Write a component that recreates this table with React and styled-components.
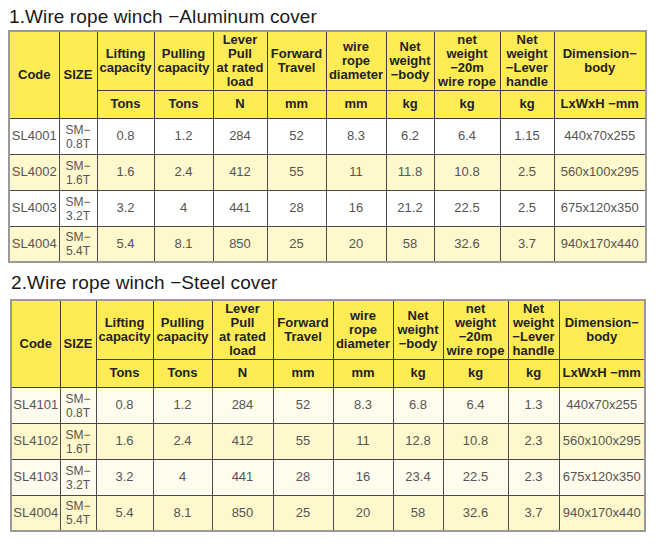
import React from "react";
import styled, { createGlobalStyle } from "styled-components";

const Global = createGlobalStyle`
  html, body { margin: 0; padding: 0; background: #ffffff; }
  body { font-family: "Liberation Sans", Arial, sans-serif; }
`;

const Page = styled.div`
  width: 662px;
  display: flex;
  flex-direction: column;
`;

const Section = styled.section`
  display: flex;
  flex-direction: column;
  padding-left: ${(p) => p.$left}px;
`;

const Title = styled.h2`
  margin: 0;
  padding: ${(p) => p.$top}px 0 ${(p) => p.$bottom}px 1px;
  font-size: 19px;
  line-height: 22px;
  font-weight: normal;
  color: #1a1a1a;
  letter-spacing: 0.1px;
`;

const Table = styled.table`
  border-collapse: collapse;
  table-layout: fixed;
  width: ${(p) => p.$width}px;
  border: 2px solid #9a9a9a;
`;

const HeadRow = styled.tr`
  height: ${(p) => p.$h}px;
  background: #ffec55;
`;

const Th = styled.th`
  border: 1px solid #3c3c3c;
  padding: 0;
  font-size: 13px;
  line-height: 14px;
  font-weight: bold;
  color: #222;
  text-align: center;
  vertical-align: middle;
  white-space: nowrap;
  overflow: hidden;
`;

const Row = styled.tr`
  height: 36px;
  background: ${(p) => p.$bg};
`;

const Td = styled.td`
  border: 1px solid #4a4a4a;
  padding: 0;
  font-size: 13px;
  line-height: 14px;
  color: #555;
  text-align: center;
  vertical-align: middle;
  white-space: nowrap;
  overflow: hidden;
`;

const SizeCell = styled(Td)`
  font-size: 12px;
  line-height: 14px;
  padding-top: 1px;
`;

const headers = [
  ["Lifting", "capacity"],
  ["Pulling", "capacity"],
  ["Lever", "Pull", "at rated", "load"],
  ["Forward", "Travel"],
  ["wire", "rope", "diameter"],
  ["Net", "weight", "\u2212body"],
  ["net", "weight", "\u221220m", "wire rope"],
  ["Net", "weight", "\u2212Lever", "handle"],
  ["Dimension\u2212", "body"],
];

const units = ["Tons", "Tons", "N", "mm", "mm", "kg", "kg", "kg", "LxWxH \u2212mm"];

const Lines = ({ lines }) =>
  lines.map((l, i) => (
    <React.Fragment key={i}>
      {i > 0 && <br />}
      {l}
    </React.Fragment>
  ));

const SpecTable = ({ cols, rows, bgs }) => (
  <Table $width={cols.reduce((a, b) => a + b, 0)}>
    <colgroup>
      {cols.map((w, i) => (
        <col key={i} style={{ width: w }} />
      ))}
    </colgroup>
    <thead>
      <HeadRow $h={59}>
        <Th rowSpan={2}>Code</Th>
        <Th rowSpan={2}>SIZE</Th>
        {headers.map((h, i) => (
          <Th key={i}>
            <Lines lines={h} />
          </Th>
        ))}
      </HeadRow>
      <HeadRow $h={28}>
        {units.map((u, i) => (
          <Th key={i}>{u}</Th>
        ))}
      </HeadRow>
    </thead>
    <tbody>
      {rows.map((r, ri) => (
        <Row key={ri} $bg={bgs[ri % 2]}>
          <Td>{r[0]}</Td>
          <SizeCell>
            SM{"\u2212"}
            <br />
            {r[1]}
          </SizeCell>
          {r.slice(2).map((v, i) => (
            <Td key={i}>{v}</Td>
          ))}
        </Row>
      ))}
    </tbody>
  </Table>
);

const rows1 = [
  ["SL4001", "0.8T", "0.8", "1.2", "284", "52", "8.3", "6.2", "6.4", "1.15", "440x70x255"],
  ["SL4002", "1.6T", "1.6", "2.4", "412", "55", "11", "11.8", "10.8", "2.5", "560x100x295"],
  ["SL4003", "3.2T", "3.2", "4", "441", "28", "16", "21.2", "22.5", "2.5", "675x120x350"],
  ["SL4004", "5.4T", "5.4", "8.1", "850", "25", "20", "58", "32.6", "3.7", "940x170x440"],
];

const rows2 = [
  ["SL4101", "0.8T", "0.8", "1.2", "284", "52", "8.3", "6.8", "6.4", "1.3", "440x70x255"],
  ["SL4102", "1.6T", "1.6", "2.4", "412", "55", "11", "12.8", "10.8", "2.3", "560x100x295"],
  ["SL4103", "3.2T", "3.2", "4", "441", "28", "16", "23.4", "22.5", "2.3", "675x120x350"],
  ["SL4004", "5.4T", "5.4", "8.1", "850", "25", "20", "58", "32.6", "3.7", "940x170x440"],
];

export default function App() {
  return (
    <Page>
      <Global />
      <Section $left={8}>
        <Title $top={6} $bottom={2}>1.Wire rope winch {"\u2212"}Aluminum cover</Title>
        <SpecTable
          cols={[50, 38, 57, 59, 54, 59, 60, 48, 66, 54, 92]}
          rows={rows1}
          bgs={["#ffffff", "#fff8cc"]}
        />
      </Section>
      <Section $left={10}>
        <Title $top={9} $bottom={5}>2.Wire rope winch {"\u2212"}Steel cover</Title>
        <SpecTable
          cols={[49, 36, 57, 59, 61, 60, 60, 50, 65, 51, 86]}
          rows={rows2}
          bgs={["#fffcee", "#fff8cc"]}
        />
      </Section>
    </Page>
  );
}
